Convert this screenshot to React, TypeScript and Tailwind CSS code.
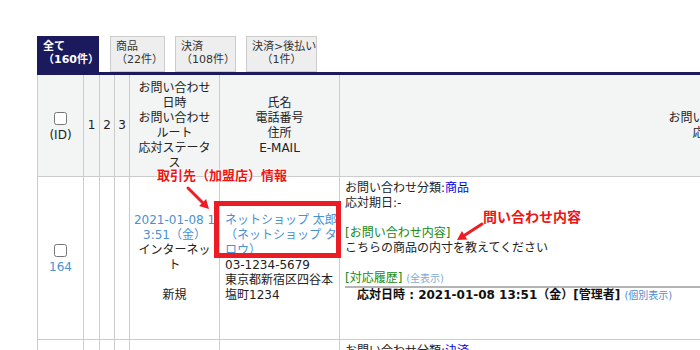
import React from 'react';

const cell = 'border-r border-b border-[#ccc]';
const headCell = 'flex h-[102px] flex-col items-center justify-center border-r border-b border-[#ccc] bg-[#f3f4f4] text-center';
const bodyCenter = 'flex h-[163px] flex-col items-center justify-center border-r border-b border-[#ccc] text-center';
const ln = 'block h-[15px] whitespace-nowrap';

const Tab: React.FC<{ className: string; children: React.ReactNode }> = ({ className, children }) => (
    <div className={`h-[36px] border px-[5px] pt-[3px] ${className}`}>{children}</div>
);

export default function App() {
    return (
        <div className="relative h-[350px] w-[700px] overflow-hidden bg-white font-['DejaVu_Sans','Noto_Sans_CJK_JP',sans-serif] text-[12px] leading-[15px] text-[#222]">
            <div className="pl-[37px] pt-[36px]">
                {/* Tabs */}
                <div className="flex text-[11px] leading-[13px]">
                    <Tab className="mr-[11px] w-[62px] border-[#1a1a5c] bg-[#1a1a5c] font-bold text-white">
                        <span className="block whitespace-nowrap">全て</span>
                        <span className="block whitespace-nowrap">（160件）</span>
                    </Tab>
                    <Tab className="mr-[10px] w-[55px] border-[#ccc] bg-[#eee] text-[#333]">
                        <span className="block whitespace-nowrap">商品</span>
                        <span className="block whitespace-nowrap">（22件）</span>
                    </Tab>
                    <Tab className="mr-[10px] w-[61px] border-[#ccc] bg-[#eee] text-[#333]">
                        <span className="block whitespace-nowrap">決済</span>
                        <span className="block whitespace-nowrap">（108件）</span>
                    </Tab>
                    <Tab className="w-[71px] border-[#ccc] bg-[#eee] text-center text-[#333]">
                        <span className="block whitespace-nowrap">決済&gt;後払い</span>
                        <span className="block whitespace-nowrap">（1件）</span>
                    </Tab>
                </div>
                <div className="h-[3px] w-[700px] bg-[#1a1a5c]" />

                {/* Table */}
                <div className="grid w-[1057px] grid-cols-[46px_16px_15px_15px_90px_120px_754px] border-l border-[#ccc]">
                    {/* header row */}
                    <div className={headCell}>
                        <input type="checkbox" className="my-[3px] h-[13px] w-[13px]" />
                        <span className={ln}>(ID)</span>
                    </div>
                    <div className={headCell}>1</div>
                    <div className={headCell}>2</div>
                    <div className={headCell}>3</div>
                    <div className={headCell}>
                        <span className={ln}>お問い合わせ</span>
                        <span className={ln}>日時</span>
                        <span className={ln}>お問い合わせ</span>
                        <span className={ln}>ルート</span>
                        <span className={ln}>応対ステータ</span>
                        <span className={ln}>ス</span>
                    </div>
                    <div className={headCell}>
                        <span className={ln}>氏名</span>
                        <span className={ln}>電話番号</span>
                        <span className={ln}>住所</span>
                        <span className={ln}>E-MAIL</span>
                    </div>
                    <div className={headCell}>
                        <span className={ln}>お問い合わせ内容</span>
                        <span className={ln}>応対履歴</span>
                    </div>

                    {/* row 164 */}
                    <div className={bodyCenter}>
                        <input type="checkbox" className="my-[3px] h-[13px] w-[13px]" />
                        <span className={`${ln} text-[#4a90d4]`}>164</span>
                    </div>
                    <div className={`h-[163px] ${cell}`} />
                    <div className={`h-[163px] ${cell}`} />
                    <div className={`h-[163px] ${cell}`} />
                    <div className={bodyCenter}>
                        <span className={`${ln} text-[#4a90d4]`}>2021-01-08 1</span>
                        <span className={`${ln} text-[#4a90d4]`}>3:51（金）</span>
                        <span className={ln}>インターネッ</span>
                        <span className={ln}>ト</span>
                        <span className={ln} />
                        <span className={ln}>新規</span>
                    </div>
                    <div className={`flex h-[163px] flex-col justify-center pl-[5px] ${cell}`}>
                        <span className={`${ln} text-[#4a90d4]`}>ネットショップ 太郎</span>
                        <span className={`${ln} text-[#4a90d4]`}>（ネットショップ タ</span>
                        <span className={`${ln} text-[#4a90d4]`}>ロウ）</span>
                        <span className={ln}>03-1234-5679</span>
                        <span className={ln}>東京都新宿区四谷本</span>
                        <span className={ln}>塩町1234</span>
                    </div>
                    <div className={`h-[163px] pl-[5px] pt-[4px] ${cell}`}>
                        <span className={ln}>お問い合わせ分類:<span className="text-[#0000ee]">商品</span></span>
                        <span className={ln}>応対期日:<span className="text-[#0000ee]">-</span></span>
                        <span className={ln} />
                        <span className={`${ln} text-[#138a13]`}>[お問い合わせ内容]</span>
                        <span className={ln}>こちらの商品の内寸を教えてください</span>
                        <span className={ln} />
                        <span className={ln}>
                            <span className="text-[#138a13]">[対応履歴]</span>{' '}
                            <span className="text-[10px] text-[#7fa9d2]">(全表示)</span>
                        </span>
                        <div className="border-t-2 border-[#b4b4b4] pl-[12px]">
                            <span className={`${ln} font-bold text-[#111]`}>
                                応対日時 : 2021-01-08 13:51（金）[管理者]{' '}
                                <span className="text-[10px] font-normal text-[#4f8ccc]">(個別表示)</span>
                            </span>
                        </div>
                    </div>

                    {/* next row */}
                    <div className={`h-[40px] border-r border-[#ccc]`} />
                    <div className={`h-[40px] border-r border-[#ccc]`} />
                    <div className={`h-[40px] border-r border-[#ccc]`} />
                    <div className={`h-[40px] border-r border-[#ccc]`} />
                    <div className={`h-[40px] border-r border-[#ccc]`} />
                    <div className={`h-[40px] border-r border-[#ccc]`} />
                    <div className="h-[40px] pl-[5px] pt-[4px]">
                        <span className={ln}>お問い合わせ分類:<span className="text-[#0000ee]">決済</span></span>
                    </div>
                </div>
            </div>

            {/* Annotations */}
            <div className="pointer-events-none absolute left-[157px] top-[168px] whitespace-nowrap text-[13px] font-bold leading-[16px] text-[#ee1515] [text-shadow:0_0_2px_#fff,0_0_2px_#fff,0_0_2px_#fff]">
                取引先（加盟店）情報
            </div>
            <div className="pointer-events-none absolute left-[214px] top-[201px] h-[57px] w-[127px] border-[5px] border-[#ed1c24]" />
            <div className="pointer-events-none absolute left-[483px] top-[209px] whitespace-nowrap text-[14px] font-bold leading-[16px] text-[#ee1515] [text-shadow:0_0_2px_#fff,0_0_2px_#fff]">
                問い合わせ内容
            </div>
            <svg className="pointer-events-none absolute left-0 top-0" width="700" height="350" viewBox="0 0 700 350">
                <line x1="188" y1="188" x2="203" y2="203" stroke="#ee1c24" strokeWidth="3" strokeLinecap="round" />
                <polygon points="209,209 199.1,206.1 206.1,199.1" fill="#ee1c24" />
                <line x1="482" y1="224" x2="464.6" y2="235.2" stroke="#ee1c24" strokeWidth="3" strokeLinecap="round" />
                <polygon points="457,240 467.3,239.4 461.9,230.9" fill="#ee1c24" />
            </svg>
        </div>
    );
}
